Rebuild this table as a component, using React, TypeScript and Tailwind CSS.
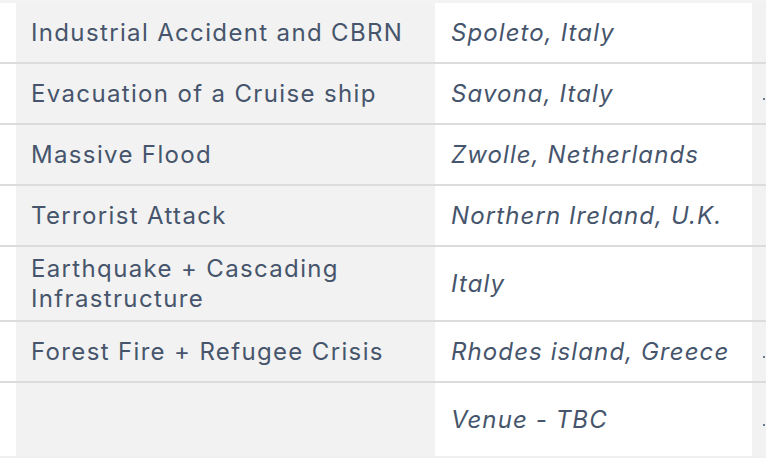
const rows = [
  { title: "Industrial Accident and CBRN", place: "Spoleto, Italy", tall: false, mark: false },
  { title: "Evacuation of a Cruise ship", place: "Savona, Italy", tall: false, mark: true },
  { title: "Massive Flood", place: "Zwolle, Netherlands", tall: false, mark: false },
  { title: "Terrorist Attack", place: "Northern Ireland, U.K.", tall: false, mark: false },
  { title: "Earthquake + Cascading\nInfrastructure", place: "Italy", tall: true, mark: false },
  { title: "Forest Fire + Refugee Crisis", place: "Rhodes island, Greece", tall: false, mark: true },
  { title: "", place: "Venue - TBC", tall: true, mark: true },
];

export default function App() {
  return (
    <div
      className="h-[464px] w-[766px] overflow-hidden bg-white text-[#46556c]"
      style={{ fontFamily: "Inter, 'Noto Sans', sans-serif" }}
    >
      <div className="border-t-[3px] border-[#f3f3f3]">
        {rows.map((row, i) => {
          const last = i === rows.length - 1;
          return (
            <div
              key={i}
              className={
                "flex border-b-2 " +
                (last ? "h-[75px] border-[#f0f0f0]" : row.tall ? "h-[75px] border-[#dcdcdc]" : "h-[61px] border-[#dcdcdc]")
              }
            >
              <div className="w-[16px] shrink-0" />
              <div className="flex w-[419px] shrink-0 items-center whitespace-pre-line bg-[#f2f2f2] pl-[15px] text-[24px] leading-[30px] tracking-[1.35px]">
                {row.title}
              </div>
              <div className="flex w-[317px] shrink-0 items-center pl-[16px] text-[24px] italic leading-[30px] tracking-[1.1px]">
                {row.place}
              </div>
              <div className="flex flex-1 items-center bg-[#f2f2f2] pl-[11px]">
                {row.mark && <span className="mt-[10px] h-[2px] w-[2px] bg-[#6b7890]" />}
              </div>
            </div>
          );
        })}
      </div>
    </div>
  );
}
